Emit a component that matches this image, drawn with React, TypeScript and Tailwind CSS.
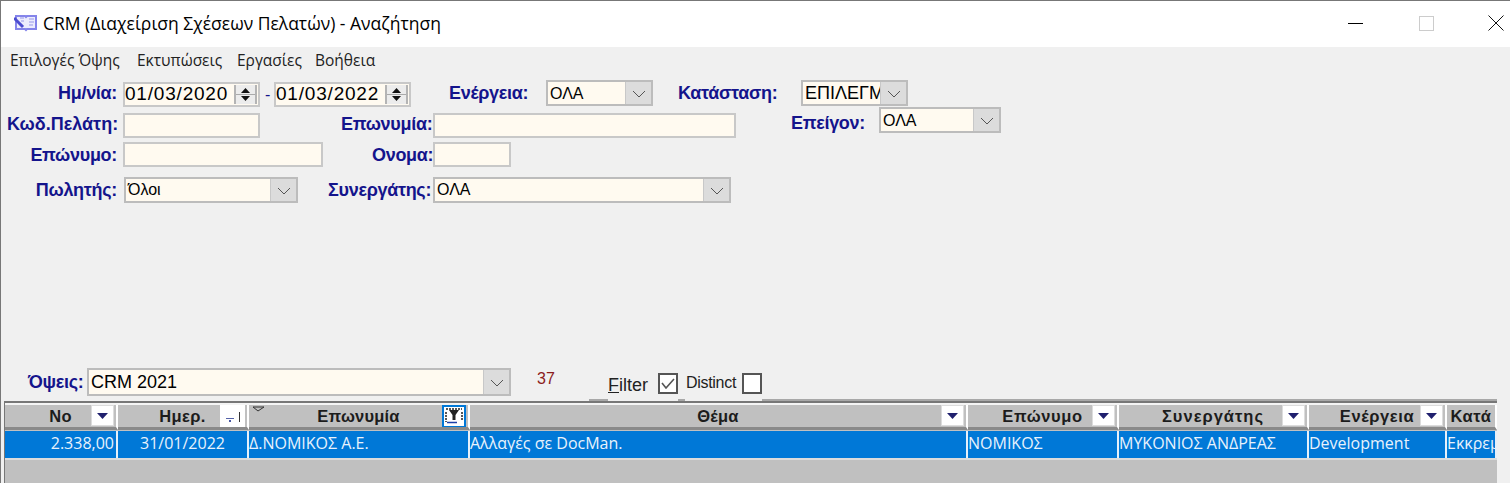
import type { ReactNode } from "react";

const columns = [
  { title: "No", width: "w-[113px]", text: "2.338,00", align: "justify-end pr-[2px]", icon: "arrow", tracking: "tracking-[0.3px]" },
  { title: "Ημερ.", width: "w-[131px]", text: "31/01/2022", align: "justify-center", icon: "sort", tracking: "tracking-[0.4px]" },
  { title: "Επωνυμία", width: "w-[221px]", text: "Δ.ΝΟΜΙΚΟΣ Α.Ε.", align: "justify-start", icon: "filter", tracking: "tracking-[0.2px]" },
  { title: "Θέμα", width: "w-[498px]", text: "Αλλαγές σε DocMan.", align: "justify-start", icon: "arrow", tracking: "tracking-[0.2px]" },
  { title: "Επώνυμο", width: "w-[151px]", text: "ΝΟΜΙΚΟΣ", align: "justify-start", icon: "arrow", tracking: "tracking-[0.6px]" },
  { title: "Συνεργάτης", width: "w-[190px]", text: "ΜΥΚΟΝΙΟΣ ΑΝΔΡΕΑΣ", align: "justify-start", icon: "arrow", tracking: "tracking-[1px]" },
  { title: "Ενέργεια", width: "w-[138px]", text: "Development", align: "justify-start", icon: "arrow", tracking: "tracking-[0.6px]" },
  { title: "Κατά", width: "w-[50px]", text: "Εκκρεμ", align: "justify-start", icon: "none", tracking: "tracking-[0.6px]" },
];

function Label({ children, className = "", tracking = "tracking-[-0.3px]" }: { children: ReactNode; className?: string; tracking?: string }) {
  return (
    <span className={`shrink-0 whitespace-nowrap font-['Liberation_Sans',sans-serif] text-[18px] font-bold text-[#14148c] ${tracking} ${className}`}>
      {children}
    </span>
  );
}

function Input({ className = "", children }: { className?: string; children?: ReactNode }) {
  return (
    <div className={`flex h-[25px] shrink-0 items-center overflow-hidden border-2 border-[#c8c8c8] bg-[#fffaf0] font-['Liberation_Sans',sans-serif] text-[16px] text-black ${className}`}>
      {children}
    </div>
  );
}

function Chevron() {
  return (
    <svg width="14" height="8" viewBox="0 0 14 8" fill="none" stroke="#555" strokeWidth="1">
      <path d="M1 1 L7 7 L13 1" />
    </svg>
  );
}

function Combo({ value, className = "", inputClass = "" }: { value: string; className?: string; inputClass?: string }) {
  return (
    <div className={`flex h-[26px] shrink-0 border-2 border-[#bcbcbc] bg-[#fffaf0] font-['Liberation_Sans',sans-serif] text-[16px] text-black ${className}`}>
      <div className={`flex min-w-0 flex-1 items-center overflow-hidden whitespace-nowrap pl-[2px] ${inputClass}`}>{value}</div>
      <div className="flex w-[26px] shrink-0 items-center justify-center border-l border-[#c8c8c8] bg-[#dcdcdc] pt-[2px]">
        <Chevron />
      </div>
    </div>
  );
}

function DateField({ value }: { value: string }) {
  return (
    <Input className="w-[137px] justify-between">
      <span className="text-[19px] tracking-[0.8px]">{value}</span>
      <div className="mr-[1px] flex h-[19px] w-[23px] flex-col items-center justify-center gap-[1px] border-x-2 border-[#b4b4b4] bg-[#ececec]">
        <svg width="9" height="5" viewBox="0 0 9 5"><path d="M4.5 0 L9 5 H0 Z" fill="#111" /></svg>
        <div className="h-[1px] w-full bg-[#aaa]" />
        <svg width="9" height="5" viewBox="0 0 9 5"><path d="M0 0 H9 L4.5 5 Z" fill="#111" /></svg>
      </div>
    </Input>
  );
}

function HeaderIcon({ kind }: { kind: string }) {
  if (kind === "none") return null;
  if (kind === "filter") {
    return (
      <div className="flex h-[23px] w-[24px] items-center justify-center border-[2px] border-[#0078d7] bg-white">
        <svg width="18" height="17" viewBox="0 0 18 17">
          <path d="M1 1 H17 M1 4 V14 M17 4 V12" stroke="#222" strokeWidth="1.5" strokeDasharray="2 1" fill="none" />
          <path d="M4 2 H14 L10.5 7 V12 H7.5 V7 Z" fill="#222" />
          <path d="M2 14.5 H12" stroke="#1c3fa8" strokeWidth="1.5" />
        </svg>
      </div>
    );
  }
  if (kind === "sort") {
    return (
      <div className="flex h-[22px] w-[25px] items-end justify-center gap-[5px] bg-white pb-[5px]">
        <svg width="8" height="4" viewBox="0 0 8 4"><path d="M0 0 H8 M4 2 V4" stroke="#1c2f8c" strokeWidth="1.6" /></svg>
        <div className="h-[10px] w-[1px] bg-[#333]" />
      </div>
    );
  }
  return (
    <div className="flex h-[21px] w-[23px] items-center justify-center border border-[#dcdcdc] bg-white">
      <svg width="11" height="6" viewBox="0 0 11 6"><path d="M0 0 H11 L5.5 6 Z" fill="#20206e" /></svg>
    </div>
  );
}

export default function App() {
  return (
    <div className="flex h-[483px] w-[1510px] flex-col overflow-hidden border-l border-t border-[#777] bg-[#f0f0f0] font-['Liberation_Sans',sans-serif]">
      {/* title bar */}
      <div className="flex h-[46px] shrink-0 items-center bg-white">
        <svg className="ml-[13px] mt-[-3px]" width="24" height="20" viewBox="0 0 24 20" fill="none">
          <path d="M2 3 H11 L12 4 L13 3 H22 V16 H13 L12 17 L11 16 H2 Z" fill="#ececfd" stroke="#8484ea" strokeWidth="2" />
          <path d="M0 5 L9 14" stroke="#4c4cd0" strokeWidth="3" />
          <path d="M15 6 H20 M15 9 H20 M15 12 H19" stroke="#b4b4f0" strokeWidth="1.4" />
          <path d="M6 5 H10 M7 8 H10" stroke="#b4b4f0" strokeWidth="1.4" />
        </svg>
        <span className="ml-[5px] mt-[-2px] whitespace-nowrap font-['Open_Sans',sans-serif] text-[17.5px] text-black">
          CRM (Διαχείριση Σχέσεων Πελατών) - Αναζήτηση
        </span>
        <div className="ml-auto flex items-center">
          <div className="mr-[56px] mt-[-2px] h-[1px] w-[15px] bg-black" />
          <div className="mr-[54px] mt-[-2px] h-[15px] w-[15px] border border-[#ccc]" />
          <svg className="mr-[6px] mt-[-2px]" width="16" height="16" viewBox="0 0 16 16">
            <path d="M0.5 0.5 L15.5 15.5 M15.5 0.5 L0.5 15.5" stroke="#111" strokeWidth="1" />
          </svg>
        </div>
      </div>

      {/* menu */}
      <div className="mt-[5px] flex h-[18px] shrink-0 items-center whitespace-nowrap pl-[9px] font-['Open_Sans',sans-serif] text-[15.5px] text-[#222]">
        <span className="w-[113px]">Επιλογές Όψης</span>
        <span className="ml-[14px] w-[85px]">Εκτυπώσεις</span>
        <span className="ml-[15px] w-[66px]">Εργασίες</span>
        <span className="ml-[12px]">Βοήθεια</span>
      </div>

      {/* search form */}
      <div className="mt-[10px] flex h-[26px] shrink-0 items-center">
        <Label className="ml-[6px] mt-[1px] w-[110px] text-right">Ημ/νία:</Label>
        <div className="ml-[6px] mt-[3px]"><DateField value="01/03/2020" /></div>
        <span className="mx-[5px] mt-[3px] w-[4px] text-[16px] text-[#14148c]">-</span>
        <div className="mt-[3px]"><DateField value="01/03/2022" /></div>
        <Label className="ml-[38px] mt-[1px] w-[78px]">Ενέργεια:</Label>
        <Combo value="ΟΛΑ" className="ml-[19px] w-[107px]" inputClass="pt-[1px]" />
        <Label className="ml-[25px] mt-[1px] w-[98px]">Κατάσταση:</Label>
        <Combo value="ΕΠΙΛΕΓΜ" className="ml-[25px] w-[107px]" inputClass="text-[18px]" />
      </div>

      <div className="mt-[1px] flex h-[31px] shrink-0 items-end">
        <Label className="mb-0 ml-[6px] w-[110px] text-right" tracking="tracking-normal">Κωδ.Πελάτη:</Label>
        <Input className="ml-[6px] w-[137px]" />
        <Label className="mb-0 ml-[81px] w-[89px] text-right">Επωνυμία:</Label>
        <Input className="ml-[3px] w-[303px]" />
        <Label className="mb-[1px] ml-[55px] w-[72px]">Επείγον:</Label>
        <Combo value="ΟΛΑ" className="mb-[5px] ml-[16px] w-[122px]" inputClass="pt-[2px]" />
      </div>

      <div className="mt-[4px] flex h-[25px] shrink-0 items-center">
        <Label className="ml-[6px] mt-[1px] w-[110px] text-right">Επώνυμο:</Label>
        <Input className="ml-[6px] w-[200px]" />
        <Label className="ml-[49px] mt-[1px] w-[58px] text-right">Ονομα:</Label>
        <Input className="ml-[3px] w-[78px]" />
      </div>

      <div className="mt-[10px] flex h-[26px] shrink-0 items-center">
        <Label className="ml-[6px] w-[110px] text-right">Πωλητής:</Label>
        <Combo value="Όλοι" className="ml-[7px] w-[174px]" />
        <Label className="ml-[30px] w-[102px] text-right">Συνεργάτης:</Label>
        <Combo value="ΟΛΑ" className="ml-[3px] w-[298px]" />
      </div>

      {/* views + filter */}
      <div className="mt-auto flex h-[28px] shrink-0 items-center">
        <Label className="ml-[27px] w-[55px]">Όψεις:</Label>
        <Combo value="CRM 2021" className="ml-[4px] h-[28px] w-[424px]" inputClass="text-[18px]" />
        <span className="mb-[7px] ml-[26px] w-[18px] text-[16px] text-[#8c1c1c]">37</span>
        <span className="ml-[53px] mt-[6px] w-[40px] whitespace-nowrap text-[18px] text-[#222]"><span className="underline">F</span>ilter</span>
        <div className="ml-[10px] mt-[3px] flex h-[21px] w-[20px] items-center justify-center border-2 border-[#555] bg-white">
          <svg width="14" height="11" viewBox="0 0 14 11" fill="none"><path d="M1 5 L5 10 L13 1" stroke="#555" strokeWidth="1.6" /></svg>
        </div>
        <span className="ml-[8px] mt-[1px] w-[52px] whitespace-nowrap text-[16px] tracking-[-0.3px] text-[#222]">Distinct</span>
        <div className="ml-[4px] mt-[3px] h-[21px] w-[20px] border-2 border-[#555] bg-white" />
      </div>

      {/* little tab notches above the grid */}
      <div className="mt-[3px] flex h-[2px] shrink-0">
        <div className="ml-[588px] w-[19px] bg-[#a8a8a8]" />
        <div className="ml-[70px] w-[7px] bg-[#a8a8a8]" />
        <div className="ml-[77px] w-[735px] bg-[#a8a8a8]" />
      </div>

      {/* grid */}
      <div className="ml-[3px] flex h-[82px] w-[1493px] shrink-0 flex-col overflow-hidden border-l border-t-2 border-[#777] bg-[#c0c0c0]">
        <div className="flex h-[27px] shrink-0 border-t-2 border-[#f4f4f4] bg-[#c0c0c0]">
          {columns.map((c) => (
            <div
              key={c.title}
              className={`relative flex shrink-0 items-center justify-center overflow-hidden border-b-[3px] border-r-2 border-b-[#8a8a8a] border-r-white ${c.width}`}
            >
              {c.title === "Επωνυμία" && (
                <svg className="absolute left-[3px] top-[1px]" width="13" height="7" viewBox="0 0 13 7" fill="none">
                  <path d="M1 1 H12 L6 5 Z" stroke="#333" strokeWidth="1" />
                </svg>
              )}
              <span className={`whitespace-nowrap text-[16.5px] font-bold text-[#1c1c1c] ${c.tracking}`}>
                {c.title}
              </span>
              <div className="absolute right-[2px] top-0"><HeaderIcon kind={c.icon} /></div>
            </div>
          ))}
        </div>
        <div className="mt-[1px] flex h-[29px] shrink-0 border-b-2 border-b-[#dcdcdc] bg-[#0078d7]">
          {columns.map((c) => (
            <div
              key={c.title}
              className={`flex shrink-0 items-center overflow-hidden whitespace-nowrap border-r-2 border-r-[#e6f0fa] font-['Open_Sans',sans-serif] text-[16px] text-[#e8f2fc] ${c.width} ${c.align}`}
            >
              <span className="mt-[-3px]">{c.text}</span>
            </div>
          ))}
        </div>
      </div>
    </div>
  );
}
